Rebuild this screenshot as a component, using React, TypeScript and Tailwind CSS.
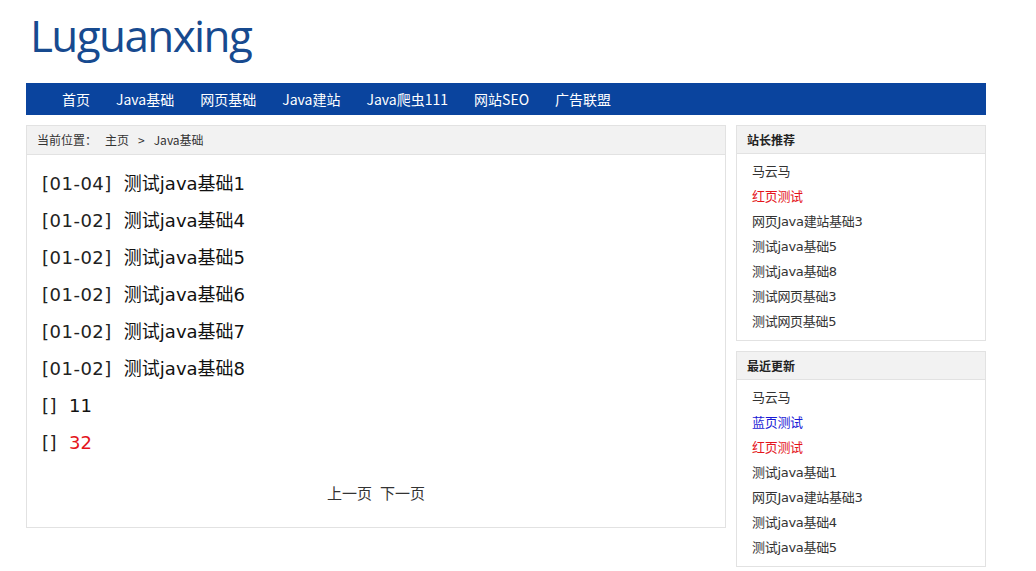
import React from "react";

const NAV = ["首页", "Java基础", "网页基础", "Java建站", "Java爬虫111", "网站SEO", "广告联盟"];

const ARTICLES: { date: string; title: string; red?: boolean }[] = [
  { date: "[01-04]", title: "测试java基础1" },
  { date: "[01-02]", title: "测试java基础4" },
  { date: "[01-02]", title: "测试java基础5" },
  { date: "[01-02]", title: "测试java基础6" },
  { date: "[01-02]", title: "测试java基础7" },
  { date: "[01-02]", title: "测试java基础8" },
  { date: "[]", title: "11" },
  { date: "[]", title: "32", red: true },
];

type Item = { text: string; color?: string };

const RECOMMEND: Item[] = [
  { text: "马云马" },
  { text: "红页测试", color: "text-[#e4141b]" },
  { text: "网页Java建站基础3" },
  { text: "测试java基础5" },
  { text: "测试java基础8" },
  { text: "测试网页基础3" },
  { text: "测试网页基础5" },
];

const LATEST: Item[] = [
  { text: "马云马" },
  { text: "蓝页测试", color: "text-[#1a1ad6]" },
  { text: "红页测试", color: "text-[#e4141b]" },
  { text: "测试java基础1" },
  { text: "网页Java建站基础3" },
  { text: "测试java基础4" },
  { text: "测试java基础5" },
];

const cjk = "font-['Noto_Sans_CJK_SC',sans-serif]";
const verdana = "font-['DejaVu_Sans','Noto_Sans_CJK_SC',sans-serif]";

function SideBox({ title, items }: { title: string; items: Item[] }) {
  return (
    <div className="border border-[#e2e2e2] bg-white">
      <div className={`h-[28px] bg-[#f2f2f2] border-b border-[#e2e2e2] px-[10px] flex items-center text-[12px] font-bold text-[#222] ${cjk}`}>
        {title}
      </div>
      <ul className="pt-[5px] pb-[6px] pl-[15px]">
        {items.map((it, i) => (
          <li
            key={i}
            className={`h-[25px] leading-[25px] text-[13px] tracking-[-0.3px] ${verdana} ${it.color ?? "text-[#333]"}`}
          >
            {it.text}
          </li>
        ))}
      </ul>
    </div>
  );
}

export default function App() {
  return (
    <div className="min-h-screen bg-white">
      <div className="w-[960px] ml-[26px]">
        {/* Header */}
        <div className="h-[83px] pl-[4px] flex items-start">
          <h1 className="mt-[8px] text-[44px] leading-[54px] text-[#174a8f] font-['Open_Sans',sans-serif] tracking-[-1.6px]">
            Luguanxing
          </h1>
        </div>

        {/* Nav */}
        <nav className={`h-[32px] bg-[#0a449e] flex items-center pl-[36px] gap-[26px] ${cjk}`}>
          {NAV.map((n) => (
            <span key={n} className="text-white text-[14px] leading-none">
              {n}
            </span>
          ))}
        </nav>

        <div className="mt-[10px] flex items-start gap-[10px]">
          {/* Main */}
          <div className="w-[700px] border border-[#e2e2e2]">
            <div className={`h-[29px] bg-[#f2f2f2] border-b border-[#e2e2e2] flex items-center pl-[10px] text-[12px] text-[#333] ${cjk}`}>
              <span>当前位置：</span>
              <span className="ml-[8px]">主页</span>
              <span className="ml-[9px]">&gt;</span>
              <span className="ml-[9px]">Java基础</span>
            </div>
            <ul className="pt-[10px] pl-[15px]">
              {ARTICLES.map((a, i) => (
                <li key={i} className={`h-[37px] leading-[37px] text-[18px] text-[#222] ${verdana}`}>
                  <span className="tracking-[0.5px]">{a.date}</span>
                  <span className={`ml-[12px] ${a.red ? "text-[#e4141b]" : "text-[#111]"}`}>{a.title}</span>
                </li>
              ))}
            </ul>
            <div className={`pt-[21px] pb-[22px] flex justify-center gap-[8px] text-[15px] text-[#333] ${cjk}`}>
              <span>上一页</span>
              <span>下一页</span>
            </div>
          </div>

          {/* Sidebar */}
          <div className="w-[250px] flex flex-col gap-[10px]">
            <SideBox title="站长推荐" items={RECOMMEND} />
            <SideBox title="最近更新" items={LATEST} />
          </div>
        </div>
      </div>
    </div>
  );
}
